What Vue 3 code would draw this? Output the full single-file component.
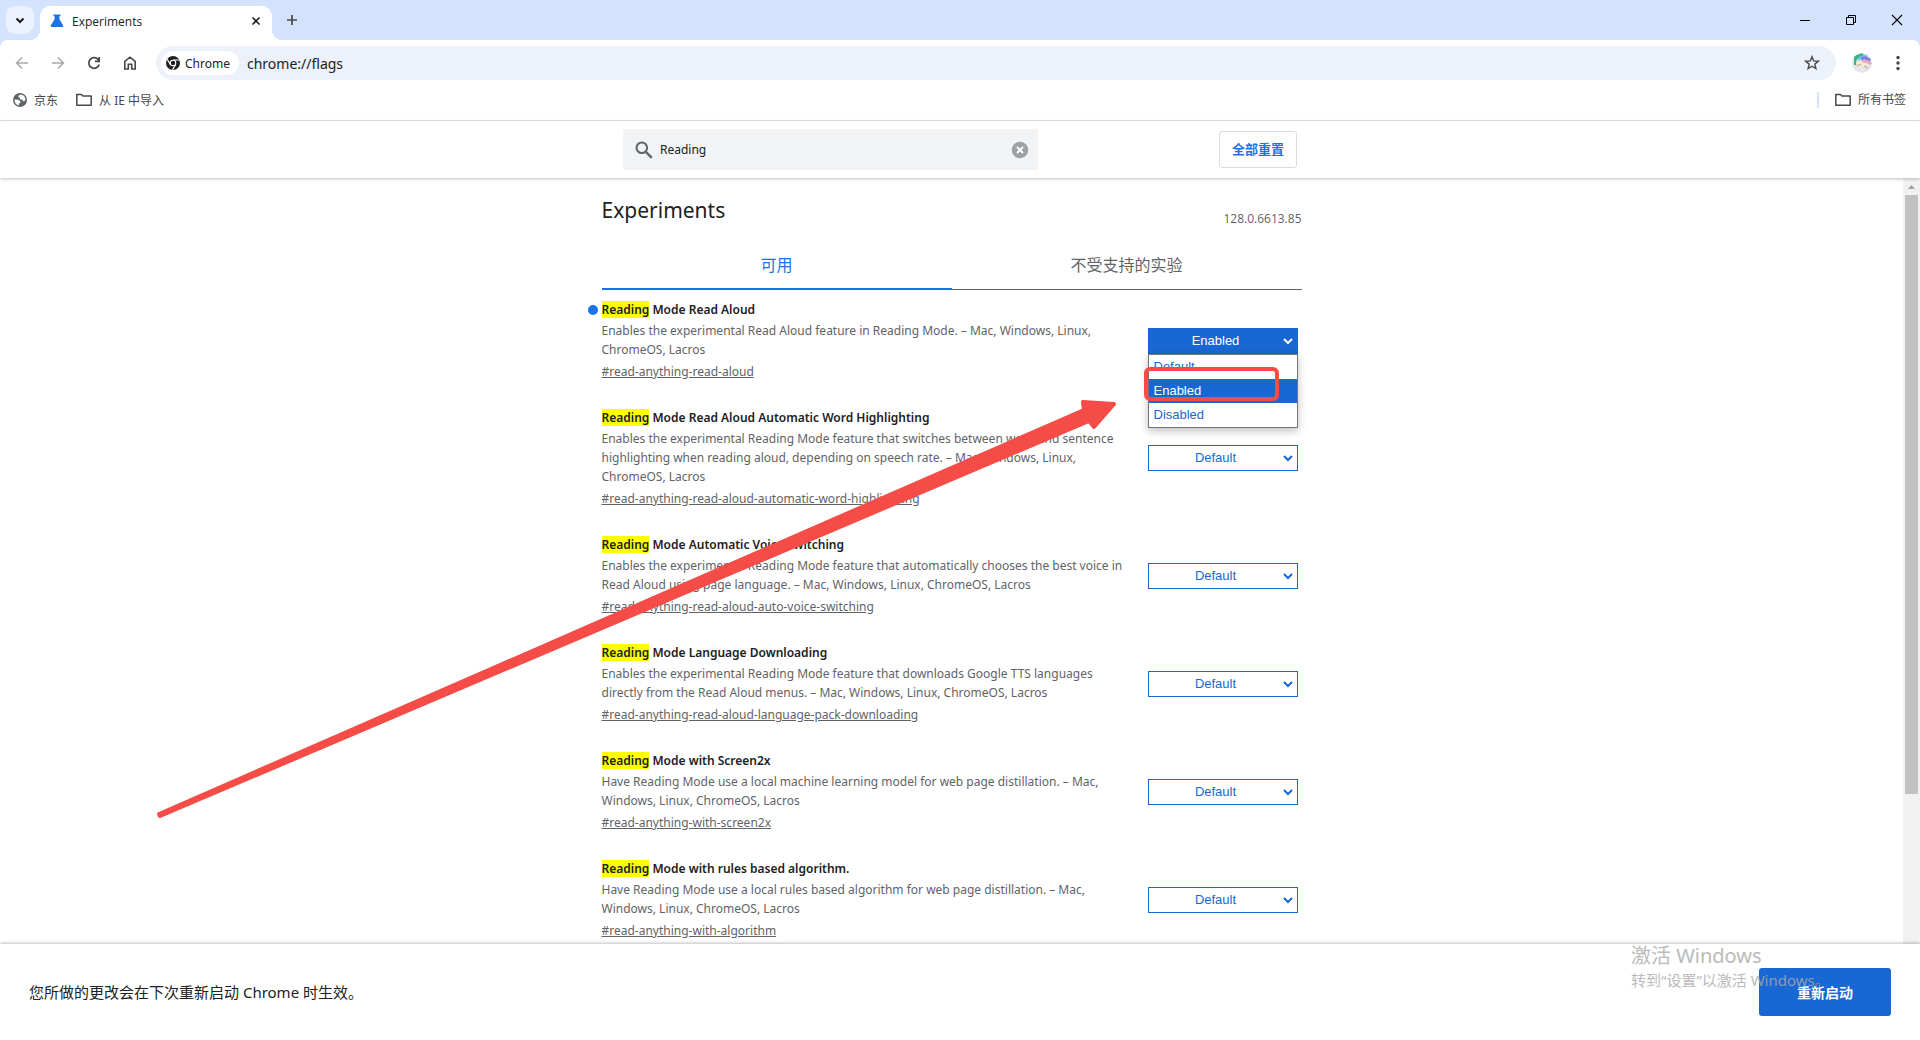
<script setup>
import { ref } from 'vue'

const query = ref('Reading')
const options = ['Default', 'Enabled', 'Disabled']

const flags = ref([
  {
    id: 'read-anything-read-aloud',
    title: 'Mode Read Aloud',
    lines: ['Enables the experimental Read Aloud feature in Reading Mode. – Mac, Windows, Linux,', 'ChromeOS, Lacros'],
    value: 'Enabled',
    open: true,
  },
  {
    id: 'read-anything-read-aloud-automatic-word-highlighting',
    title: 'Mode Read Aloud Automatic Word Highlighting',
    lines: [
      'Enables the experimental Reading Mode feature that switches between word and sentence',
      'highlighting when reading aloud, depending on speech rate. – Mac, Windows, Linux,',
      'ChromeOS, Lacros',
    ],
    value: 'Default',
  },
  {
    id: 'read-anything-read-aloud-auto-voice-switching',
    title: 'Mode Automatic Voice Switching',
    lines: [
      'Enables the experimental Reading Mode feature that automatically chooses the best voice in',
      'Read Aloud using page language. – Mac, Windows, Linux, ChromeOS, Lacros',
    ],
    value: 'Default',
  },
  {
    id: 'read-anything-read-aloud-language-pack-downloading',
    title: 'Mode Language Downloading',
    lines: [
      'Enables the experimental Reading Mode feature that downloads Google TTS languages',
      'directly from the Read Aloud menus. – Mac, Windows, Linux, ChromeOS, Lacros',
    ],
    value: 'Default',
  },
  {
    id: 'read-anything-with-screen2x',
    title: 'Mode with Screen2x',
    lines: [
      'Have Reading Mode use a local machine learning model for web page distillation. – Mac,',
      'Windows, Linux, ChromeOS, Lacros',
    ],
    value: 'Default',
  },
  {
    id: 'read-anything-with-algorithm',
    title: 'Mode with rules based algorithm.',
    lines: [
      'Have Reading Mode use a local rules based algorithm for web page distillation. – Mac,',
      'Windows, Linux, ChromeOS, Lacros',
    ],
    value: 'Default',
  },
])
</script>

<template>
  <div class="window">
    <header class="tabstrip">
      <button class="tab-search" aria-label="Search tabs">
        <svg width="28" height="28" viewBox="0 0 28 28"><path d="M10.500 12.500l3.500 3.500 3.500-3.500" fill="none" stroke="#1f1f1f" stroke-width="2" /></svg>
      </button>
      <div class="tab">
        <svg width="14" height="14" viewBox="0 0 14 14"><path d="M3.500 0.500h7v1.500H9.500v3.500L13 11q.8 2-1.200 2H2.200Q.2 13 1 11l3.500-5.500V2H3.500z" fill="#1a73e8" /></svg>
        <span class="tab-title">Experiments</span>
        <button class="icon-btn" aria-label="Close tab">
          <svg width="12" height="12" viewBox="0 0 12 12"><path d="M2.500 2.500l7 7M9.500 2.500l-7 7" stroke="#1f1f1f" stroke-width="1.600" /></svg>
        </button>
      </div>
      <button class="icon-btn new-tab" aria-label="New tab">
        <svg width="12" height="12" viewBox="0 0 12 12"><path d="M6 1v10M1 6h10" stroke="#474747" stroke-width="1.700" /></svg>
      </button>
      <div class="window-controls">
        <button class="icon-btn" aria-label="Minimize"><svg width="12" height="12" viewBox="0 0 12 12"><path d="M1 6.500h10" stroke="#000" /></svg></button>
        <button class="icon-btn" aria-label="Restore"><svg width="12" height="12" viewBox="0 0 12 12"><path d="M1.500 3.500h7v7h-7zM3.500 3.500v-2h7v7h-2" fill="none" stroke="#000" /></svg></button>
        <button class="icon-btn" aria-label="Close"><svg width="12" height="12" viewBox="0 0 12 12"><path d="M1 1l10 10M11 1L1 11" stroke="#000" stroke-width="1.100" /></svg></button>
      </div>
    </header>

    <div class="chrome">
      <nav class="toolbar">
        <div class="nav-buttons">
          <button class="icon-btn" aria-label="Back"><svg width="16" height="16" viewBox="0 0 16 16"><path d="M14 8H3M8 2.500L2.500 8 8 13.500" fill="none" stroke="#a9a9a9" stroke-width="1.500" /></svg></button>
          <button class="icon-btn" aria-label="Forward"><svg width="16" height="16" viewBox="0 0 16 16"><path d="M2 8h11M8 2.500L13.500 8 8 13.500" fill="none" stroke="#a9a9a9" stroke-width="1.500" /></svg></button>
          <button class="icon-btn" aria-label="Reload"><svg width="16" height="16" viewBox="0 0 16 16"><path d="M13.200 9.500A5.300 5.300 0 1 1 12.500 5M13.200 2v4.300H9" fill="none" stroke="#474747" stroke-width="1.700" /></svg></button>
          <button class="icon-btn" aria-label="Home"><svg width="16" height="16" viewBox="0 0 16 16"><path d="M2.800 14V6.300L8 2.200l5.200 4.100V14H9.700V9.300H6.300V14z" fill="none" stroke="#474747" stroke-width="1.600" /></svg></button>
        </div>
        <div class="omnibox">
          <span class="site-chip">
            <svg width="14" height="14" viewBox="0 0 14 14">
              <circle cx="7" cy="7" r="7" fill="#1f1f1f" />
              <circle cx="7" cy="7" r="3.300" fill="#fff" />
              <path d="M7 4h6.300M4.300 8.500L1.200 3.200M9.600 8.500L6.500 13.900" stroke="#fff" stroke-width="1.200" />
              <circle cx="7" cy="7" r="2.200" fill="#1f1f1f" />
            </svg>
            Chrome
          </span>
          <input class="url" type="text" value="chrome://flags" aria-label="Address" />
          <button class="icon-btn" aria-label="Bookmark this tab"><svg width="16" height="16" viewBox="0 0 16 16"><path d="M8 1.700l1.700 4.200 4.600.3-3.500 2.900 1.100 4.500L8 11.200l-3.900 2.400 1.100-4.500L1.700 6.200l4.600-.3z" fill="none" stroke="#474747" stroke-width="1.400" /></svg></button>
        </div>
        <button class="icon-btn" aria-label="Profile">
          <svg width="20" height="20" viewBox="0 0 20 20">
            <clipPath id="avatar"><circle cx="10" cy="10" r="10" /></clipPath>
            <g clip-path="url(#avatar)">
              <path d="M0 0h20v20H0z" fill="#e6e6e6" />
              <path d="M2 12V3l8-3 3 3-6 4-2 5z" fill="#35b58c" />
              <path d="M6 7q3-4 9-4" fill="none" stroke="#6fd0dd" stroke-width="2.500" />
              <path d="M9 6q5-3 9 2" fill="none" stroke="#7a82e4" stroke-width="3" />
              <path d="M10 9q5-2 9 2" fill="none" stroke="#eba6bd" stroke-width="3" />
              <path d="M5 6l3 3 5 1 4 4-3 1-4-2-5 1-1-4z" fill="#f3eadb" />
              <path d="M5 13l4-2M12 13l4 2" stroke="#b79a8c" />
            </g>
          </svg>
        </button>
        <button class="icon-btn" aria-label="Menu"><svg width="16" height="16" viewBox="0 0 16 16" fill="#474747"><circle cx="8" cy="2.500" r="1.700" /><circle cx="8" cy="8" r="1.700" /><circle cx="8" cy="13.500" r="1.700" /></svg></button>
      </nav>

      <nav class="bookmarks">
        <a href="#" class="bookmark">
          <svg width="14" height="14" viewBox="0 0 14 14">
            <circle cx="7" cy="7" r="7" fill="#5f6368" />
            <path d="M8.600 1.600Q5 2 5.200 4.200l1.600.4.200 2 2.600.2.600 1.600 2.200-.9Q12.800 3.200 8.600 1.600zM1.500 6.600l3.800.2 2.200 1.700-.3 1.600-1.400.5.200 1.900Q1.500 11.500 1.500 6.600z" fill="#fff" />
          </svg>
          京东
        </a>
        <a href="#" class="bookmark">
          <svg width="16" height="14" viewBox="0 0 16 14"><path d="M.8 1.500h4.700l1.500 1.500h8.200v9.200H.8z" fill="none" stroke="#474747" stroke-width="1.500" stroke-linejoin="round" /></svg>
          从 IE 中导入
        </a>
        <a href="#" class="bookmark all-bookmarks">
          <svg width="16" height="14" viewBox="0 0 16 14"><path d="M.8 1.500h4.700l1.500 1.500h8.200v9.200H.8z" fill="none" stroke="#474747" stroke-width="1.500" stroke-linejoin="round" /></svg>
          所有书签
        </a>
      </nav>
    </div>

    <div class="search-bar">
      <label class="search">
        <svg width="18" height="18" viewBox="0 0 18 18"><circle cx="6.800" cy="6.800" r="5.300" fill="none" stroke="#5f6368" stroke-width="2" /><path d="M10.800 10.800l6 6" stroke="#5f6368" stroke-width="2.400" /></svg>
        <input v-model="query" type="text" aria-label="Search flags" />
        <button class="icon-btn" aria-label="Clear search" @click="query = ''">
          <svg width="18" height="18" viewBox="0 0 18 18"><circle cx="9" cy="9" r="8.300" fill="#9fa2a5" /><path d="M6 6l6 6M12 6l-6 6" stroke="#fff" stroke-width="1.800" /></svg>
        </button>
      </label>
      <button class="reset">全部重置</button>
    </div>

    <div class="viewport">
      <main class="content">
        <div class="heading">
          <h1>Experiments</h1>
          <span class="version">128.0.6613.85</span>
        </div>
        <div class="tabs" role="tablist">
          <button role="tab" class="section-tab active" aria-selected="true">可用</button>
          <button role="tab" class="section-tab" aria-selected="false">不受支持的实验</button>
        </div>
        <section v-for="flag in flags" :key="flag.id" class="flag">
          <div class="flag-text">
            <h2 :class="{ changed: flag.value !== 'Default' }"><mark>Reading</mark> {{ flag.title }}</h2>
            <p><span v-for="line in flag.lines" :key="line">{{ line }}</span></p>
            <a :href="'#' + flag.id">#{{ flag.id }}</a>
          </div>
          <div class="picker" :class="{ enabled: flag.value !== 'Default' }">
            <select v-model="flag.value" :aria-label="flag.title">
              <option v-for="option in options" :key="option">{{ option }}</option>
            </select>
            <svg class="chevron" width="10" height="8" viewBox="0 0 10 8"><path d="M1 2l4 4 4-4" fill="none" stroke="currentColor" stroke-width="2" /></svg>
            <ul v-if="flag.open" class="menu" role="listbox">
              <li v-for="option in options" :key="option" role="option" :class="{ selected: option === flag.value }">{{ option }}</li>
            </ul>
            <div v-if="flag.open" class="callout"></div>
          </div>
        </section>
      </main>
      <div class="scrollbar">
        <svg width="17" height="17" viewBox="0 0 17 17"><path d="M5 11l3.500-4 3.500 4z" fill="#a3a3a3" /></svg>
        <div class="track"><div class="thumb"></div></div>
      </div>
    </div>

    <footer class="restart-bar">
      <p>您所做的更改会在下次重新启动 Chrome 时生效。</p>
      <button class="restart">重新启动</button>
      <div class="watermark">
        <strong>激活 Windows</strong>
        <span>转到“设置”以激活 Windows。</span>
      </div>
    </footer>

    <svg class="arrow" width="964" height="426" viewBox="0 0 964 426">
      <path d="M5 420L930 16L929 8L960 10L940 33L935 27L6 422z" fill="#f64c47" stroke="#f64c47" stroke-width="4" stroke-linejoin="round" />
    </svg>
  </div>
</template>

<style>
body {
  margin: 0;
}
</style>

<style scoped>
* {
  box-sizing: border-box;
}
.window {
  position: relative;
  display: flex;
  flex-direction: column;
  height: 100vh;
  overflow: hidden;
  background: #fff;
  color: #202124;
  font: 12px/19px "Noto Sans", "Noto Sans CJK SC", sans-serif;
}
button,
input,
select {
  font: inherit;
  color: inherit;
}
.icon-btn {
  display: flex;
  padding: 0;
  border: 0;
  background: none;
}
svg {
  display: block;
  flex: none;
}

.tabstrip {
  display: flex;
  align-items: center;
  height: 40px;
  padding-left: 6px;
  background: #d3e3fd;
}
.tab-search {
  padding: 0;
  border: 0;
  border-radius: 9px;
  background: #ecf2fe;
}
.tab {
  position: relative;
  display: flex;
  align-items: center;
  align-self: flex-end;
  width: 232px;
  height: 34px;
  margin-left: 6px;
  padding: 0 10px 4px;
  border-radius: 10px 10px 0 0;
  background: #fff;
}
.tab::before,
.tab::after {
  content: "";
  position: absolute;
  bottom: 0;
  width: 10px;
  height: 10px;
}
.tab::before {
  right: 100%;
  background: radial-gradient(circle at 0 0, #d3e3fd 10px, #fff 10px);
}
.tab::after {
  left: 100%;
  background: radial-gradient(circle at 100% 0, #d3e3fd 10px, #fff 10px);
}
.tab-title {
  flex: 1;
  margin-left: 8px;
  font-family: "Open Sans", sans-serif;
}
.new-tab {
  margin-left: 14px;
}
.window-controls {
  display: flex;
  gap: 34px;
  margin-left: auto;
  padding-right: 17px;
}

.chrome {
  border-bottom: 1px solid #dfe1e5;
  background: linear-gradient(#d3e3fd, #d3e3fd) top / 100% 8px no-repeat;
}
.toolbar {
  display: flex;
  align-items: center;
  height: 46px;
  padding: 0 14px;
  border-radius: 8px 8px 0 0;
  background: #fff;
}
.nav-buttons {
  display: flex;
  gap: 20px;
}
.omnibox {
  display: flex;
  flex: 1;
  align-items: center;
  height: 34px;
  margin: 0 16px 0 18px;
  padding: 0 16px 0 5px;
  border-radius: 17px;
  background: #ecf1fa;
}
.site-chip {
  display: flex;
  align-items: center;
  gap: 5px;
  height: 24px;
  padding: 0 9px 0 5px;
  border-radius: 12px;
  background: #fff;
}
.url {
  flex: 1;
  padding: 0 8px;
  border: 0;
  outline: 0;
  background: none;
  font-size: 14px;
}
.toolbar > .icon-btn + .icon-btn {
  margin-left: 18px;
}
.bookmarks {
  display: flex;
  align-items: center;
  gap: 18px;
  height: 34px;
  padding: 0 14px 6px 13px;
}
.bookmark {
  display: flex;
  align-items: center;
  gap: 7px;
  color: #474747;
  text-decoration: none;
}
.all-bookmarks {
  margin-left: auto;
  padding-left: 16px;
  border-left: 2px solid #d3e3fd;
  line-height: 16px;
}

.search-bar {
  position: relative;
  z-index: 1;
  display: flex;
  align-items: center;
  justify-content: space-between;
  width: 100%;
  height: 57px;
  padding: 0 calc(50% - 337px);
  box-shadow: 0 1px 3px rgba(0, 0, 0, 0.25);
}
.search {
  display: flex;
  align-items: center;
  width: 415px;
  height: 41px;
  padding: 0 9px 0 12px;
  border-radius: 2px;
  background: #f1f3f4;
}
.search input {
  flex: 1;
  padding: 0 7px;
  border: 0;
  outline: 0;
  background: none;
}
.reset {
  width: 78px;
  height: 37px;
  padding: 0;
  border: 1px solid #dadce0;
  border-radius: 3px;
  background: #fff;
  color: #1a73e8;
  font-size: 13px;
  font-weight: 700;
}

.viewport {
  display: flex;
  flex: 1;
  min-height: 0;
}
.content {
  width: 700px;
  margin: 0 auto;
}
.heading {
  display: flex;
  align-items: center;
  justify-content: space-between;
  height: 64px;
}
h1 {
  margin: 0;
  font-size: 21px;
  font-weight: 400;
}
.version {
  margin-top: 16px;
  color: #5f6368;
  font-family: "Open Sans", sans-serif;
}
.tabs {
  display: flex;
  margin-bottom: 10px;
}
.section-tab {
  flex: 1;
  height: 48px;
  padding: 0;
  border: 0;
  border-bottom: 1px solid #5f6368;
  background: none;
  color: #5f6368;
  font-size: 16px;
}
.section-tab.active {
  border-bottom: 2px solid #1a73e8;
  color: #1a73e8;
}
.flag {
  display: flex;
  align-items: center;
  justify-content: space-between;
  margin-bottom: 27px;
  padding-right: 4px;
}
h2 {
  position: relative;
  margin: 0;
  font-size: 12px;
  font-weight: 600;
}
h2.changed::before {
  content: "";
  position: absolute;
  top: 5px;
  left: -14px;
  width: 10px;
  height: 10px;
  border-radius: 50%;
  background: #1a73e8;
}
mark {
  background: #ff0;
  color: inherit;
}
.flag p {
  margin: 2px 0 3px;
  color: #5f6368;
}
.flag p span {
  display: block;
  white-space: nowrap;
}
.flag a {
  display: block;
  color: #5f6368;
}
.picker {
  position: relative;
  width: 150px;
  color: #1967d2;
  font: 13px/24px "Liberation Sans", sans-serif;
}
select {
  display: block;
  width: 100%;
  height: 26px;
  padding: 0 16px 0 2px;
  border: 1px solid #1967d2;
  border-radius: 0;
  outline: 0;
  appearance: none;
  background: #fff;
  text-align-last: center;
}
.enabled select {
  background: #1967d2;
  color: #fff;
}
.chevron {
  position: absolute;
  top: 9px;
  right: 5px;
  pointer-events: none;
}
.enabled .chevron {
  color: #fff;
}
.menu {
  position: absolute;
  z-index: 1;
  top: 100%;
  left: 0;
  width: 100%;
  margin: 0;
  padding: 0;
  border: 1px solid #767676;
  background: #fff;
  box-shadow: 0 3px 8px rgba(0, 0, 0, 0.25);
  list-style: none;
}
.menu li {
  padding-left: 5px;
}
.menu .selected {
  background: #1967d2;
  color: #fff;
}
.callout {
  position: absolute;
  z-index: 2;
  top: 39px;
  left: -4px;
  width: 135px;
  height: 34px;
  border: 4px solid #f64c47;
  border-radius: 6px;
}
.scrollbar {
  display: flex;
  flex-direction: column;
  width: 17px;
  background: #f1f1f1;
}
.track {
  flex: 1;
  padding: 0 2px;
}
.thumb {
  height: 80%;
  background: #c1c1c1;
}

.restart-bar {
  position: relative;
  display: flex;
  align-items: center;
  justify-content: space-between;
  height: 96px;
  padding: 0 29px;
  background: #fff;
  box-shadow: 0 -1px 3px rgba(0, 0, 0, 0.25);
  font-size: 15px;
}
.restart {
  width: 132px;
  height: 48px;
  padding: 0;
  border: 0;
  border-radius: 3px;
  background: #1967d2;
  color: #fff;
  font-size: 14px;
  font-weight: 700;
}
.watermark {
  position: absolute;
  top: 0;
  right: 95px;
  width: 194px;
  color: #aaa;
  opacity: 0.8;
  line-height: 24px;
  white-space: nowrap;
  pointer-events: none;
}
.watermark strong {
  display: block;
  font-size: 20px;
  font-weight: 400;
}
.arrow {
  position: absolute;
  z-index: 3;
  top: 394px;
  left: 154px;
  pointer-events: none;
}
</style>
